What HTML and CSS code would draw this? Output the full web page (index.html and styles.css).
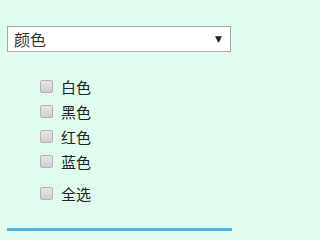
FILE: index.html
```html
<!DOCTYPE html>
<html lang="zh">
<head>
<meta charset="utf-8">
<link rel="stylesheet" href="styles.css">
</head>
<body>
<div class="page">
  <div class="select">
    <span class="select-text">颜色</span>
    <span class="select-arrow">▼</span>
  </div>
  <ul class="options">
    <li class="option"><span class="box"></span><span class="label">白色</span></li>
    <li class="option"><span class="box"></span><span class="label">黑色</span></li>
    <li class="option"><span class="box"></span><span class="label">红色</span></li>
    <li class="option"><span class="box"></span><span class="label">蓝色</span></li>
    <li class="option all"><span class="box"></span><span class="label">全选</span></li>
  </ul>
  <div class="bar"></div>
</div>
</body>
</html>
```
FILE: styles.css
```css
html, body {
  margin: 0;
  padding: 0;
  background: #dffcef;
  height: 100%;
}
.page {
  padding: 26px 8px 0 7px;
  font-family: "Noto Sans CJK SC", "Noto Sans", sans-serif;
  color: #222;
}
.select {
  box-sizing: border-box;
  height: 26px;
  width: 224px;
  background: #fff;
  border: 1px solid #a9a9a9;
  display: flex;
  align-items: center;
  justify-content: space-between;
  padding: 0 8px 0 6px;
}
.select-text {
  font-size: 16px;
  line-height: 1;
  color: #333;
}
.select-arrow {
  font-family: "DejaVu Sans", sans-serif;
  font-size: 9px;
  color: #222;
}
.options {
  list-style: none;
  margin: 0;
  padding: 24px 0 0 33px;
  display: flex;
  flex-direction: column;
  gap: 5px;
}
.option {
  display: flex;
  align-items: center;
  height: 20px;
  gap: 8px;
}
.option.all {
  margin-top: 7px;
}
.box {
  box-sizing: border-box;
  width: 13px;
  height: 13px;
  border: 1px solid #b4b4b4;
  border-radius: 2px;
  background: linear-gradient(#e6e6e6, #cfcfcf);
}
.label {
  font-size: 15px;
  color: #222;
}
.bar {
  margin-top: 25px;
  height: 3px;
  width: 225px;
  background: #55b4de;
}
```
